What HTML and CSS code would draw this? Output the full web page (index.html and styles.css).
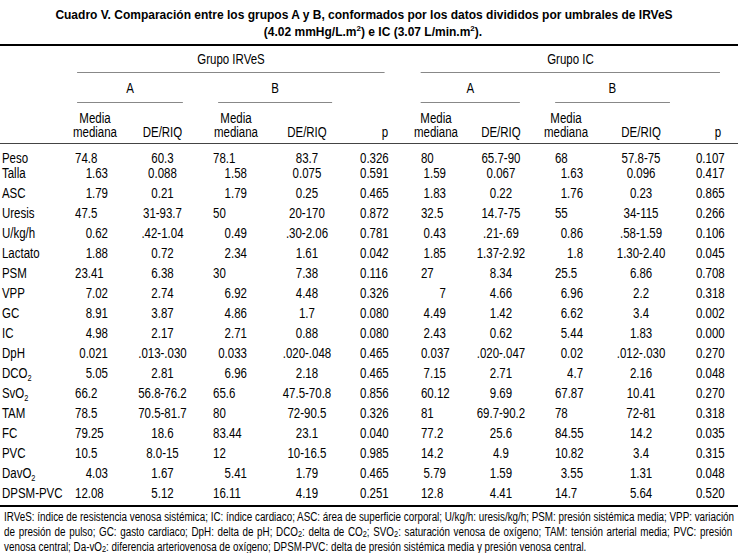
FILE: index.html
```html
<!DOCTYPE html>
<html lang="es">
<head>
<meta charset="utf-8">
<title>Cuadro V</title>
<link rel="stylesheet" href="styles.css">
</head>
<body>
<div class="page">
  <h1 class="title"><span class="t1">Cuadro V. Comparación entre los grupos A y B, conformados por los datos divididos por umbrales de IRVeS</span><span class="t2">(4.02 mmHg/L.m<sup>2</sup>) e IC (3.07 L/min.m<sup>2</sup>).</span></h1>

  <div class="sheet">
    <div class="thead">
      <div class="hrow h1">
        <div></div>
        <div class="hgroup">Grupo IRVeS</div>
        <div></div>
        <div class="hgroup">Grupo IC</div>
        <div></div>
      </div>
      <div class="hrow h2">
        <div></div>
        <div class="hsub">A</div>
        <div></div>
        <div class="hsub">B</div>
        <div></div>
        <div class="hsub">A</div>
        <div></div>
        <div class="hsub">B</div>
        <div></div>
      </div>
      <div class="grid h3">
        <div></div>
        <div class="hc"><span>Media</span><span>mediana</span></div>
        <div class="hc">DE/RIQ</div>
        <div class="hc"><span>Media</span><span>mediana</span></div>
        <div class="hc">DE/RIQ</div>
        <div class="hc">p</div>
        <div class="hc hmc"><span>Media</span><span>mediana</span></div>
        <div class="hc">DE/RIQ</div>
        <div class="hc"><span>Media</span><span>mediana</span></div>
        <div class="hc">DE/RIQ</div>
        <div class="hc hp2">p</div>
      </div>
    </div>

    <div class="tbody">
      <div class="grid row first"><div class="lab">Peso</div><div class="ma">74.8</div><div class="de">60.3</div><div class="mb">78.1</div><div class="de">83.7</div><div class="p1">0.326</div><div class="mc">80</div><div class="de">65.7-90</div><div class="md">68</div><div class="de">57.8-75</div><div class="p2">0.107</div></div>
      <div class="grid row"><div class="lab">Talla</div><div class="ma R">1.63</div><div class="de">0.088</div><div class="mb R">1.58</div><div class="de">0.075</div><div class="p1">0.591</div><div class="mc R">1.59</div><div class="de">0.067</div><div class="md R">1.63</div><div class="de">0.096</div><div class="p2">0.417</div></div>
      <div class="grid row"><div class="lab">ASC</div><div class="ma R">1.79</div><div class="de">0.21</div><div class="mb R">1.79</div><div class="de">0.25</div><div class="p1">0.465</div><div class="mc R">1.83</div><div class="de">0.22</div><div class="md R">1.76</div><div class="de">0.23</div><div class="p2">0.865</div></div>
      <div class="grid row"><div class="lab">Uresis</div><div class="ma">47.5</div><div class="de">31-93.7</div><div class="mb">50</div><div class="de">20-170</div><div class="p1">0.872</div><div class="mc">32.5</div><div class="de">14.7-75</div><div class="md">55</div><div class="de">34-115</div><div class="p2">0.266</div></div>
      <div class="grid row"><div class="lab">U/kg/h</div><div class="ma R">0.62</div><div class="de">.42-1.04</div><div class="mb R">0.49</div><div class="de">.30-2.06</div><div class="p1">0.781</div><div class="mc R">0.43</div><div class="de">.21-.69</div><div class="md R">0.86</div><div class="de">.58-1.59</div><div class="p2">0.106</div></div>
      <div class="grid row"><div class="lab">Lactato</div><div class="ma R">1.88</div><div class="de">0.72</div><div class="mb R">2.34</div><div class="de">1.61</div><div class="p1">0.042</div><div class="mc R">1.85</div><div class="de">1.37-2.92</div><div class="md R">1.8</div><div class="de">1.30-2.40</div><div class="p2">0.045</div></div>
      <div class="grid row"><div class="lab">PSM</div><div class="ma">23.41</div><div class="de">6.38</div><div class="mb">30</div><div class="de">7.38</div><div class="p1">0.116</div><div class="mc">27</div><div class="de">8.34</div><div class="md">25.5</div><div class="de">6.86</div><div class="p2">0.708</div></div>
      <div class="grid row"><div class="lab">VPP</div><div class="ma R">7.02</div><div class="de">2.74</div><div class="mb R">6.92</div><div class="de">4.48</div><div class="p1">0.326</div><div class="mc R">7</div><div class="de">4.66</div><div class="md R">6.96</div><div class="de">2.2</div><div class="p2">0.318</div></div>
      <div class="grid row"><div class="lab">GC</div><div class="ma R">8.91</div><div class="de">3.87</div><div class="mb R">4.86</div><div class="de">1.7</div><div class="p1">0.080</div><div class="mc R">4.49</div><div class="de">1.42</div><div class="md R">6.62</div><div class="de">3.4</div><div class="p2">0.002</div></div>
      <div class="grid row"><div class="lab">IC</div><div class="ma R">4.98</div><div class="de">2.17</div><div class="mb R">2.71</div><div class="de">0.88</div><div class="p1">0.080</div><div class="mc R">2.43</div><div class="de">0.62</div><div class="md R">5.44</div><div class="de">1.83</div><div class="p2">0.000</div></div>
      <div class="grid row"><div class="lab">DpH</div><div class="ma R">0.021</div><div class="de">.013-.030</div><div class="mb R">0.033</div><div class="de">.020-.048</div><div class="p1">0.465</div><div class="mc R">0.037</div><div class="de">.020-.047</div><div class="md R">0.02</div><div class="de">.012-.030</div><div class="p2">0.270</div></div>
      <div class="grid row"><div class="lab">DCO<sub>2</sub></div><div class="ma R">5.05</div><div class="de">2.81</div><div class="mb R">6.96</div><div class="de">2.18</div><div class="p1">0.465</div><div class="mc R">7.15</div><div class="de">2.71</div><div class="md R">4.7</div><div class="de">2.16</div><div class="p2">0.048</div></div>
      <div class="grid row"><div class="lab">SvO<sub>2</sub></div><div class="ma">66.2</div><div class="de">56.8-76.2</div><div class="mb">65.6</div><div class="de">47.5-70.8</div><div class="p1">0.856</div><div class="mc">60.12</div><div class="de">9.69</div><div class="md">67.87</div><div class="de">10.41</div><div class="p2">0.270</div></div>
      <div class="grid row"><div class="lab">TAM</div><div class="ma">78.5</div><div class="de">70.5-81.7</div><div class="mb">80</div><div class="de">72-90.5</div><div class="p1">0.326</div><div class="mc">81</div><div class="de">69.7-90.2</div><div class="md">78</div><div class="de">72-81</div><div class="p2">0.318</div></div>
      <div class="grid row"><div class="lab">FC</div><div class="ma">79.25</div><div class="de">18.6</div><div class="mb">83.44</div><div class="de">23.1</div><div class="p1">0.040</div><div class="mc">77.2</div><div class="de">25.6</div><div class="md">84.55</div><div class="de">14.2</div><div class="p2">0.035</div></div>
      <div class="grid row"><div class="lab">PVC</div><div class="ma">10.5</div><div class="de">8.0-15</div><div class="mb">12</div><div class="de">10-16.5</div><div class="p1">0.985</div><div class="mc">14.2</div><div class="de">4.9</div><div class="md">10.82</div><div class="de">3.4</div><div class="p2">0.315</div></div>
      <div class="grid row"><div class="lab">DavO<sub>2</sub></div><div class="ma R">4.03</div><div class="de">1.67</div><div class="mb R">5.41</div><div class="de">1.79</div><div class="p1">0.465</div><div class="mc R">5.79</div><div class="de">1.59</div><div class="md R">3.55</div><div class="de">1.31</div><div class="p2">0.048</div></div>
      <div class="grid row"><div class="lab">DPSM-PVC</div><div class="ma">12.08</div><div class="de">5.12</div><div class="mb">16.11</div><div class="de">4.19</div><div class="p1">0.251</div><div class="mc">12.8</div><div class="de">4.41</div><div class="md">14.7</div><div class="de">5.64</div><div class="p2">0.520</div></div>
    </div>

    <div class="note">
      <span class="nl">IRVeS: índice de resistencia venosa sistémica; IC: índice cardiaco; ASC: área de superficie corporal; U/kg/h: uresis/kg/h; PSM: presión sistémica media; VPP: variación</span>
      <span class="nl">de presión de pulso; GC: gasto cardiaco; DpH: delta de pH; DCO<sub>2</sub>: delta de CO<sub>2</sub>; SVO<sub>2</sub>: saturación venosa de oxígeno; TAM: tensión arterial media; PVC: presión</span>
      <span class="nl last">venosa central; Da-vO<sub>2</sub>: diferencia arteriovenosa de oxígeno; DPSM-PVC: delta de presión sistémica media y presión venosa central.</span>
    </div>
  </div>
</div>
</body>
</html>
```

FILE: styles.css
```css
html, body {
  margin: 0;
  padding: 0;
  background: #fff;
}

body {
  font-family: "Liberation Sans", Arial, sans-serif;
  color: #000;
  font-size: 14px;
}

.page {
  width: 738px;
  height: 553px;
  overflow: hidden;
}

.title {
  margin: 0;
  padding-top: 7px;
  font-size: 12px;
  font-weight: bold;
  line-height: 17px;
  text-align: center;
}

.t1 {
  display: block;
  padding-right: 10px;
}

.t2 {
  display: block;
  padding-left: 8px;
}

.title sup {
  font-size: 8px;
  line-height: 0;
  vertical-align: 5px;
}

/* Narrow (Arial Narrow–like) rendering: the sheet is laid out 900px wide
   and compressed horizontally to the 738px page. */
.sheet {
  width: 900px;
  transform: scaleX(0.82);
  transform-origin: 0 0;
}

.thead {
  margin-top: 3px;
  border-top: 2px solid #000;
  border-bottom: 1px solid #444;
}

.hrow {
  display: grid;
  line-height: 14px;
}

.h1 {
  grid-template-columns: 93.9px 375.6px 43.9px 364.6px 22px;
}

.hgroup {
  text-align: center;
  padding: 6px 0;
  border-bottom: 1px solid #888;
}

.h2 {
  grid-template-columns: 93.9px 129.3px 42.7px 139px 108.5px 120.7px 42.7px 140.2px 82.9px;
}

.hsub {
  text-align: center;
  padding: 8px 0 7px;
  border-bottom: 1px solid #888;
}

.grid {
  display: grid;
  grid-template-columns: 91.46px 48.78px 115.85px 63.41px 109.76px 80.49px 63.41px 75.61px 83.05px 100px 68.18px;
}

.h3 {
  line-height: 14px;
  padding: 8px 0 4px;
}

.hc {
  display: flex;
  flex-direction: column;
  align-items: center;
  justify-content: flex-end;
  white-space: nowrap;
  text-align: center;
}

.hmc {
  padding-right: 19.5px;
}

.hp2 {
  padding-left: 19.5px;
}

.tbody {
  padding-top: 4px;
  padding-bottom: 2px;
  border-bottom: 2px solid #000;
}

.row {
  height: 20px;
  line-height: 20px;
  white-space: nowrap;
}

.row.first {
  height: 15px;
}

.row sub {
  font-size: 9px;
  line-height: 0;
  vertical-align: -3px;
}

.note sub {
  font-size: 9px;
  line-height: 0;
  vertical-align: -1px;
}

.lab {
  padding-left: 2.4px;
}

.R {
  text-align: right;
}

.ma {
  padding-right: 8.5px;
}

.mb {
  padding-left: 3.7px;
  padding-right: 18.3px;
}

.mc {
  padding-left: 3.7px;
  padding-right: 29.3px;
}

.md {
  padding-left: 28px;
  padding-right: 20.7px;
}

.de {
  text-align: center;
}

.p1 {
  padding-left: 9.8px;
}

.p2 {
  padding-left: 17px;
}

.note {
  padding: 3px 7px 0 5px;
  font-size: 12px;
  line-height: 15px;
}

.nl {
  display: block;
  white-space: nowrap;
  text-align: justify;
  text-align-last: justify;
}

.nl.last {
  text-align-last: left;
}
```
